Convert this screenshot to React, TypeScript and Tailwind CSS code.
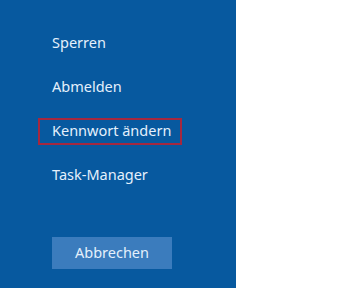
const items = ["Sperren", "Abmelden", "Kennwort ändern", "Task-Manager"];

export default function App() {
  return (
    <div className="flex h-[288px] w-[353px] bg-white font-['Noto_Sans',sans-serif]">
      <div className="flex w-[236px] flex-col bg-[#07599f] pl-[52px] pt-[21px] text-[14.5px] text-[#e4f0fc]">
        {items.map((label) => (
          <div key={label} className="flex h-[44px] items-center">
            {label === "Kennwort ändern" ? (
              <div className="-ml-[14px] flex h-[27px] w-[144px] items-center border-2 border-[#a5283f] pl-[12px]">
                {label}
              </div>
            ) : (
              label
            )}
          </div>
        ))}
        <button className="mt-[40px] flex h-[32px] w-[120px] items-center justify-center bg-[#3b7cbd] text-[14.5px] text-[#e4f0fc]">
          Abbrechen
        </button>
      </div>
    </div>
  );
}
